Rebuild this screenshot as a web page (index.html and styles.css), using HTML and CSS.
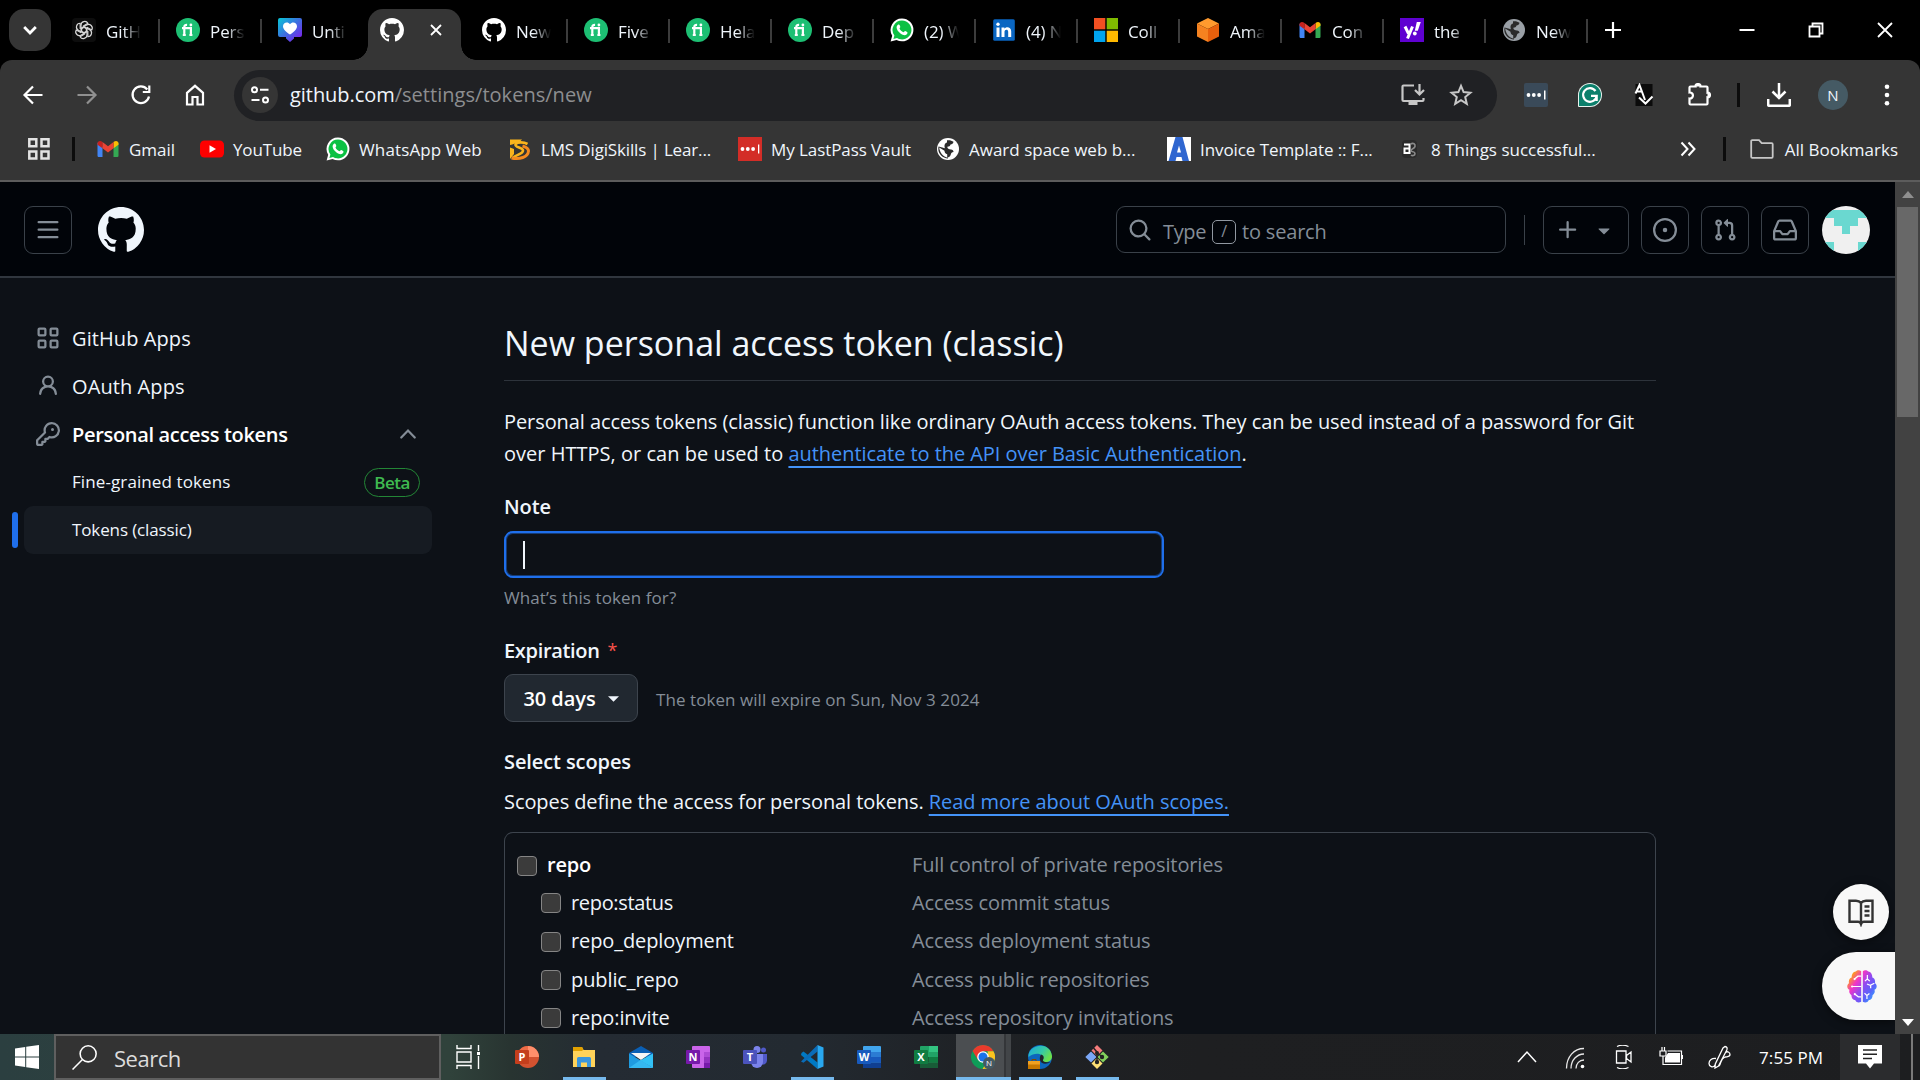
FILE: index.html
```html
<!DOCTYPE html>
<html lang="en">
<head>
<meta charset="utf-8">
<title>New personal access token (classic)</title>
<link rel="stylesheet" href="styles.css">
</head>
<body>
<svg class="defs" width="0" height="0">
  <defs>
    <symbol id="github" viewBox="0 0 16 16"><path d="M8 0c4.42 0 8 3.58 8 8a8.013 8.013 0 0 1-5.45 7.59c-.4.08-.55-.17-.55-.38 0-.27.01-1.13.01-2.2 0-.75-.25-1.23-.54-1.48 1.78-.2 3.65-.88 3.65-3.95 0-.88-.31-1.59-.82-2.15.08-.2.36-1.02-.08-2.12 0 0-.67-.22-2.2.82-.64-.18-1.32-.27-2-.27-.68 0-1.36.09-2 .27-1.53-1.03-2.2-.82-2.2-.82-.44 1.1-.16 1.92-.08 2.12-.51.56-.82 1.28-.82 2.15 0 3.06 1.86 3.75 3.64 3.95-.23.2-.44.55-.51 1.07-.46.21-1.61.55-2.33-.66-.15-.24-.6-.83-1.23-.82-.67.01-.27.38.01.53.34.19.73.9.82 1.13.16.45.68 1.31 2.69.94 0 .67.01 1.3.01 1.49 0 .21-.15.45-.55.38A7.995 7.995 0 0 1 0 8c0-4.42 3.58-8 8-8Z"/></symbol>
    <symbol id="fiverr" viewBox="0 0 24 24"><circle cx="12" cy="12" r="12" fill="#1dbf73"/><path d="M6 10.2h8.9V17M8.3 17V9.2c0-1.7.9-2.4 2.8-2.3M13.4 17h3M6.8 17h3" fill="none" stroke="#fff" stroke-width="2.2"/><circle cx="14.9" cy="7" r="1.4" fill="#fff"/></symbol>
    <symbol id="whatsapp" viewBox="0 0 24 24"><path d="M12 .5A11.4 11.4 0 0 1 12 23.3a11.4 11.4 0 0 1-5.5-1.4L.6 23.4l1.6-5.7A11.4 11.4 0 0 1 12 .5Z" fill="#fff"/><path d="M12 2.4a9.5 9.5 0 1 1-5 17.6l-3.6 1 1-3.5A9.5 9.5 0 0 1 12 2.4Z" fill="#0cc143"/><path d="M8.3 6.6c.6-.3 1.1 0 1.3.5l.7 1.7c.2.6-.9 1.4-.8 1.7.8 1.7 2.1 2.9 3.9 3.7.5.2 1.3-1.4 1.9-1.2l1.8.9c.8.4.3 2.1-.6 2.7-1.5 1-3.7.6-6-1.1-2.2-1.6-3.8-3.8-3.9-5.9 0-1.3.8-2.5 1.7-3Z" fill="#fff"/></symbol>
    <symbol id="gmail" viewBox="0 0 24 24"><path d="M1.500 5.500v13.200c0 .8.7 1.3 1.4 1.3H6.500V10Z" fill="#4285f4"/><path d="M17.500 10v10h3.600c.8 0 1.4-.6 1.4-1.3V5.500Z" fill="#34a853"/><path d="M1.500 7.800V6.500C1.500 4 4.200 3 6.500 5v6.300Z" fill="#c5221f"/><path d="M17.500 11.300V5c2.300-2 5-1 5 1.500v1.300Z" fill="#fbbc04"/><path d="M6.500 5 12 9.200 17.500 5v6.300L12 15.600l-5.500-4.300Z" fill="#ea4335"/></symbol>
    <symbol id="globe" viewBox="0 0 24 24"><circle cx="12" cy="12" r="11"/><path class="land" d="M11 3.300c2.300-.5 4.700.1 6.500 1.500-.3 1.800-1.500 2.700-3 2.800-.4 1.600-1.400 2.200-3.200 2.200 0 1.700 1.600 2.600 3.700 2.600 1.600 0 2.500 1 2.500 2.600-1.700 0-2.300 1-2.800 2.700-.6 1.800-1.700 2.500-3.500 2.800v-3.300c-1.700-.3-2.700-1.400-2.700-3.400L3.200 10.500c.4 5 4 9.500 8.800 10.300v.7C6.700 21.300 2.300 17 2.300 11.800c0-.7.1-1.500.3-2.200l6.300 1.600c-1-3.200.2-5.300 2.100-5.700Z"/></symbol>
    <linearGradient id="heartg" x1="0" y1="0" x2="1" y2="1"><stop offset="0" stop-color="#06c8d6"/><stop offset=".5" stop-color="#3f6be0"/><stop offset="1" stop-color="#8a12f0"/></linearGradient>
    <linearGradient id="braing" x1="0" y1=".1" x2="1" y2=".9"><stop offset="0" stop-color="#ff9a1f"/><stop offset=".12" stop-color="#ff9a1f"/><stop offset=".32" stop-color="#f035c8"/><stop offset=".55" stop-color="#8a4df2"/><stop offset=".75" stop-color="#5a64fa"/><stop offset="1" stop-color="#2fb4ff"/></linearGradient>
    <linearGradient id="edgeg" x1="0" y1="0" x2="1" y2=".5"><stop offset="0" stop-color="#1aa7dd"/><stop offset=".6" stop-color="#35c9a8"/><stop offset="1" stop-color="#6be04b"/></linearGradient>
  </defs>
</svg>

<div class="desktop">
  <div class="browser">
    <div class="tabstrip">
      <button class="tab-search"><svg viewBox="0 0 24 24"><path d="m7 9.500 5 5 5-5" fill="none" stroke="#fff" stroke-width="2.4"/></svg></button>
      <div class="tabs">
        <div class="tab first"><svg class="fav" viewBox="0 0 24 24"><rect width="24" height="24" rx="4" fill="#0d0d0d"/><g fill="none" stroke="#d8d8d8" stroke-width="1.2"><path id="petal" d="M12.200 14.800 9 13V7.200a3.700 3.700 0 0 1 6.900-1.900L11 8.200"/><use href="#petal" transform="rotate(60 12 12)"/><use href="#petal" transform="rotate(120 12 12)"/><use href="#petal" transform="rotate(180 12 12)"/><use href="#petal" transform="rotate(240 12 12)"/><use href="#petal" transform="rotate(300 12 12)"/></g></svg><span>GitH</span></div>
        <div class="tab"><svg class="fav"><use href="#fiverr"/></svg><span>Pers</span></div>
        <div class="tab nosep"><svg class="fav" viewBox="0 0 24 24"><path d="M0 2a2 2 0 0 1 2-2h20a2 2 0 0 1 2 2v15a2 2 0 0 1-2 2h-6v1.500L12 24l-4-3.500V19H2a2 2 0 0 1-2-2Z" fill="url(#heartg)"/><path d="M12 16.500C8.500 14.200 5 11.500 5 8.200 5 4.500 9.800 3 12 6.200 14.200 3 19 4.500 19 8.200c0 3.300-3.500 6-7 8.300Z" fill="#fff"/></svg><span>Unti</span></div>
        <div class="tab active"><svg class="fav white"><use href="#github"/></svg><svg class="close" viewBox="0 0 12 12"><path d="m1 1 10 10M11 1 1 11" stroke="#fff" stroke-width="1.8"/></svg></div>
        <div class="tab"><svg class="fav white"><use href="#github"/></svg><span>New</span></div>
        <div class="tab"><svg class="fav"><use href="#fiverr"/></svg><span>Five</span></div>
        <div class="tab"><svg class="fav"><use href="#fiverr"/></svg><span>Hela</span></div>
        <div class="tab"><svg class="fav"><use href="#fiverr"/></svg><span>Dep</span></div>
        <div class="tab"><svg class="fav"><use href="#whatsapp"/></svg><span>(2) W</span></div>
        <div class="tab"><svg class="fav" viewBox="0 0 24 24"><rect x="1.200" y="1.200" width="21.600" height="21.600" rx="1.500" fill="#0a66c2"/><path d="M4.500 9.500h3V19h-3zM9.500 9.500h2.900v1.300c1.600-2.500 6.800-2 6.800 2.500V19h-3v-5.200c0-2.800-3.700-2.600-3.700 0V19h-3z" fill="#fff"/><circle cx="6" cy="6.200" r="1.700" fill="#fff"/></svg><span>(4) N</span></div>
        <div class="tab"><svg class="fav" viewBox="0 0 24 24"><path d="M0 0h11.300v11.300H0z" fill="#f25022"/><path d="M12.700 0H24v11.300H12.700z" fill="#7fba00"/><path d="M0 12.700h11.300V24H0z" fill="#00a4ef"/><path d="M12.700 12.700H24V24H12.700z" fill="#ffb900"/></svg><span>Coll</span></div>
        <div class="tab"><svg class="fav" viewBox="0 0 24 24"><path d="M12 0 1 5.500 12 11l11-5.500Z" fill="#ff9a2e"/><path d="M1 5.500 12 11v13L1 18.500Z" fill="#f58220"/><path d="M23 5.500 12 11v13l11-5.500Z" fill="#e8600c"/></svg><span>Ama</span></div>
        <div class="tab"><svg class="fav"><use href="#gmail"/></svg><span>Con</span></div>
        <div class="tab"><svg class="fav" viewBox="0 0 24 24"><rect width="24" height="24" fill="#5f01d1"/><path d="m5 8.500 3.500 7M12.500 8.500 7.500 20.500" stroke="#fff" stroke-width="3" fill="none"/><path d="m16.800 4h4l-3 8.800h-3z" fill="#fff"/><circle cx="14.800" cy="15.500" r="1.900" fill="#fff"/></svg><span>the</span></div>
        <div class="tab"><svg class="fav globe-grey"><use href="#globe"/></svg><span>New</span></div>
      </div>
      <button class="newtab"><svg viewBox="0 0 16 16"><path d="M8 0v16M0 8h16" stroke="#fff" stroke-width="2.2"/></svg></button>
      <div class="window-controls">
        <svg viewBox="0 0 16 16"><path d="M.5 8h15" stroke="#fff" stroke-width="2"/></svg>
        <svg viewBox="0 0 16 16"><path d="M1.500 4.500h10v10h-10zM4.500 4V1.500h10v10H12" fill="none" stroke="#fff" stroke-width="1.800"/></svg>
        <svg viewBox="0 0 16 16"><path d="m1 1 14 14M15 1 1 15" stroke="#fff" stroke-width="1.800"/></svg>
      </div>
    </div>

    <div class="toolbar">
      <button class="tool"><svg viewBox="0 0 24 24"><path d="M21.500 12H4M12 3.500 3.500 12l8.500 8.500" class="ln"/></svg></button>
      <button class="tool dim"><svg viewBox="0 0 24 24"><path d="M2.500 12H20M12 3.500l8.500 8.500-8.500 8.500" class="ln"/></svg></button>
      <button class="tool"><svg viewBox="0 0 24 24"><path d="M20 13.500A8.300 8.300 0 1 1 18.300 6.500M20.300 2.500V9h-6.500" class="ln"/></svg></button>
      <button class="tool"><svg viewBox="0 0 24 24"><path d="M4 9.800 12 2.800l8 7V21.500h-5.500V14h-5v7.500H4Z" class="ln"/></svg></button>
      <div class="omnibox">
        <span class="site-chip"><svg viewBox="0 0 20 20"><g fill="none" stroke="#fff" stroke-width="2"><circle cx="4.500" cy="4.800" r="2.500"/><path d="M10 4.800h8.500M1.500 15h8"/><circle cx="15.500" cy="15" r="2.500"/></g></svg></span>
        <span class="url">github.com<em>/settings/tokens/new</em></span>
        <svg class="omni-icon" viewBox="0 0 24 24"><path d="M13 2.500H2.500a1 1 0 0 0-1 1V17a1 1 0 0 0 1 1h19a1 1 0 0 0 1-1v-2M18.500 1v10M14 7l4.500 4.500L23 7" fill="none" stroke="#c7c7c7" stroke-width="2.200"/><path d="M7.500 18h9v4h-9z" fill="#c7c7c7"/></svg>
        <svg class="omni-icon star" viewBox="0 0 24 24"><path d="m12 2.800 2.600 6.300 6.800.6-5.200 4.400 1.600 6.700L12 17.200l-5.800 3.600 1.600-6.700-5.200-4.400 6.800-.6Z" fill="none" stroke="#c7c7c7" stroke-width="2"/></svg>
      </div>
      <button class="tool"><svg viewBox="0 0 24 24"><rect width="24" height="24" rx="2" fill="#3a4a59"/><g fill="#fff"><circle cx="4.500" cy="12" r="1.900"/><circle cx="9.800" cy="12" r="1.900"/><circle cx="15.100" cy="12" r="1.900"/><path d="M20 7.500h1.500v9H20z"/></g></svg></button>
      <button class="tool"><svg viewBox="0 0 24 24"><path d="M12 0a12 12 0 1 1 0 24H1a1 1 0 0 1-1-1V12A12 12 0 0 1 12 0Z" fill="#e8f3ef"/><path d="M12 1a11 11 0 1 1 0 22H1V12A11 11 0 0 1 12 1Z" fill="#0b7f6b"/><path d="M17.500 8A6.800 6.800 0 1 0 18.700 12.800H13M18.700 12.500V18" fill="none" stroke="#fff" stroke-width="2.200"/></svg></button>
      <button class="tool"><svg viewBox="0 0 24 24"><rect x="3.500" y="1" width="17" height="22" fill="#0b0b0b"/><path d="m3.500 10.500 4-8.500L13 17M4.500 8.500h5M7 14.500l6.500 6 7-7" fill="none" stroke="#fff" stroke-width="2"/></svg></button>
      <button class="tool puzzle"><svg viewBox="0 0 24 24"><path d="M2.500 4.500a1 1 0 0 1 1-1H8.500C8 .2 14 .2 13.500 3.500h6a1 1 0 0 1 1 1v5.200c3.400-.5 3.400 5.100 0 4.600v6.200a1 1 0 0 1-1 1h-16a1 1 0 0 1-1-1v-5c4.600.3 4.600-6.300 0-6Z" fill="none" stroke="#fff" stroke-width="2.200"/><path d="M9 3.500C8.500.8 13.500.8 13 3.500zM20.500 9.500c3.300-.3 3.300 4.900 0 4.600z" fill="#fff"/></svg></button>
      <i class="tool-div"></i>
      <button class="tool"><svg viewBox="0 0 24 24"><path d="M12 0v14M5.500 8.500 12 15l6.500-6.500M1.200 16v5.800a1 1 0 0 0 1 1h19.600a1 1 0 0 0 1-1V16" fill="none" stroke="#fff" stroke-width="2.500"/></svg></button>
      <button class="tool"><span class="profile">N</span></button>
      <button class="tool"><svg viewBox="0 0 24 24"><g fill="#fff"><circle cx="12" cy="3.800" r="2.300"/><circle cx="12" cy="12" r="2.300"/><circle cx="12" cy="20.200" r="2.300"/></g></svg></button>
    </div>

    <div class="bookmarks">
      <svg class="apps" viewBox="0 0 22 22"><path d="M1.300 1.300h7v7h-7zM13.500 1.300h7v7h-7zM1.300 13.500h7v7h-7zM13.500 13.500h7v7h-7z" fill="none" stroke="#e3e3e3" stroke-width="2.500"/></svg>
      <i class="bm-div"></i>
      <div class="bm-list">
        <span class="bm"><svg><use href="#gmail"/></svg>Gmail</span>
        <span class="bm t1"><svg viewBox="0 0 24 24"><rect y="3.500" width="24" height="17" rx="4.500" fill="#f00"/><path d="m9.500 8.300 6.500 3.700-6.500 3.700z" fill="#fff"/></svg>YouTube</span>
        <span class="bm w1"><svg><use href="#whatsapp"/></svg>WhatsApp Web</span>
        <span class="bm t1"><svg viewBox="0 0 24 24"><path d="M2 2.500h12L10.500 6C7.500 6 5 7.500 2 8zM2 10.500 6 12v5l-4 5z" fill="#fbb51c"/><path d="M19.500 7c-3.500-2-10.500-2.500-12 .500-1 3 7.500 3 7.500 6 0 3.500-6 4-10 7" fill="none" stroke="#fbb51c" stroke-width="2.600"/><path d="M3.500 21c8 1.500 16.500-.500 17-7 0-3-2.500-4-6-5" fill="none" stroke="#f58a1f" stroke-width="3"/></svg>LMS DigiSkills | Lear...</span>
        <span class="bm t2"><svg viewBox="0 0 24 24"><rect width="24" height="24" fill="#d32d27"/><g fill="#fff"><circle cx="4.500" cy="12" r="1.900"/><circle cx="9.800" cy="12" r="1.900"/><circle cx="15.100" cy="12" r="1.900"/><path d="M20 7.500h1.300v9H20z"/></g></svg>My LastPass Vault</span>
        <span class="bm"><svg class="globe-white"><use href="#globe"/></svg>Award space web b...</span>
        <span class="bm t2"><svg viewBox="0 0 24 24"><rect width="24" height="24" fill="#fff"/><path d="M8.500 0h7L22 24h-6.500l-1-4h-5l-1 4H1.500Z" fill="#2f66d0"/><path d="m12 8.500 2 7h-4z" fill="#fff"/></svg>Invoice Template :: F...</span>
        <span class="bm"><svg viewBox="0 0 24 24"><rect x="4" y="3" width="15" height="18" rx="4" fill="#2a2a2a"/><g fill="none"><path d="M6 7.500h5.500V17M11.500 11.500H6.500V16H12" stroke="#fff" stroke-width="2"/><path d="M12.500 7c3-1.500 5 0 4.500 2.500s-4 2-4 4 4 .5 4 3-3 2.500-4 1.500" stroke="#8a8a8a" stroke-width="1.600"/></g></svg>8 Things successful...</span>
      </div>
      <svg class="more" viewBox="0 0 16 16"><path d="m1.500 1.500 6 6.500-6 6.500M8.500 1.500l6 6.500-6 6.500" fill="none" stroke="#fff" stroke-width="2"/></svg>
      <i class="bm-div"></i>
      <span class="bm all"><svg viewBox="0 0 24 24"><path d="M1.200 4.200a1 1 0 0 1 1-1H9l2.700 3h10a1 1 0 0 1 1 1v12.600a1 1 0 0 1-1 1H2.200a1 1 0 0 1-1-1Z" fill="none" stroke="#c7c7c7" stroke-width="1.800"/></svg>All Bookmarks</span>
    </div>

    <div class="viewport">
      <div class="page">
        <header class="gh-header">
          <button class="sq"><svg viewBox="0 0 16 16"><path d="M1 2.750A.75.75 0 0 1 1.750 2h12.500a.75.75 0 0 1 0 1.500H1.750A.75.75 0 0 1 1 2.750Zm0 5A.75.75 0 0 1 1.750 7h12.500a.75.75 0 0 1 0 1.500H1.750A.75.75 0 0 1 1 7.750ZM1.750 12h12.500a.75.75 0 0 1 0 1.500H1.750a.75.75 0 0 1 0-1.500Z"/></svg></button>
          <svg class="mark"><use href="#github"/></svg>
          <div class="search"><svg viewBox="0 0 16 16"><path d="M10.680 11.740a6 6 0 0 1-7.922-8.982 6 6 0 0 1 8.982 7.922l3.040 3.040a.749.749 0 0 1-1.060 1.060ZM11.500 7a4.499 4.499 0 1 0-8.997 0A4.499 4.499 0 0 0 11.500 7Z"/></svg><span class="ty">Type</span><kbd>/</kbd><span class="ts">to search</span></div>
          <i class="hdiv"></i>
          <button class="sq plus"><svg viewBox="0 0 16 16"><path d="M7.750 2a.75.75 0 0 1 .75.75V7h4.250a.75.75 0 0 1 0 1.500H8.500v4.250a.75.75 0 0 1-1.500 0V8.500H2.750a.75.75 0 0 1 0-1.500H7V2.750A.75.75 0 0 1 7.750 2Z"/></svg><svg viewBox="0 0 16 16"><path d="m4.427 7.427 3.396 3.396a.25.25 0 0 0 .354 0l3.396-3.396A.25.25 0 0 0 11.396 7H4.604a.25.25 0 0 0-.177.427Z"/></svg></button>
          <button class="sq"><svg viewBox="0 0 16 16"><path d="M8 9.500a1.500 1.500 0 1 0 0-3 1.500 1.500 0 0 0 0 3Z"/><path d="M8 0a8 8 0 1 1 0 16A8 8 0 0 1 8 0ZM1.500 8a6.500 6.500 0 1 0 13 0 6.500 6.500 0 0 0-13 0Z"/></svg></button>
          <button class="sq"><svg viewBox="0 0 16 16"><path d="M1.500 3.250a2.250 2.250 0 1 1 3 2.122v5.256a2.251 2.251 0 1 1-1.500 0V5.372A2.250 2.250 0 0 1 1.500 3.250Zm5.677-.177L9.573.677A.25.25 0 0 1 10 .854V2.500h1A2.500 2.500 0 0 1 13.500 5v5.628a2.251 2.251 0 1 1-1.500 0V5a1 1 0 0 0-1-1h-1v1.646a.25.25 0 0 1-.427.177L7.177 3.427a.25.25 0 0 1 0-.354ZM3.750 2.500a.75.75 0 1 0 0 1.500.75.75 0 0 0 0-1.500Zm0 9.500a.75.75 0 1 0 0 1.500.75.75 0 0 0 0-1.500Zm8.250.75a.75.75 0 1 0 1.500 0 .75.75 0 0 0-1.500 0Z"/></svg></button>
          <button class="sq"><svg viewBox="0 0 16 16"><path d="M2.800 2.060A1.750 1.750 0 0 1 4.410 1h7.180c.7 0 1.333.417 1.610 1.060l2.740 6.395c.04.093.06.194.06.295v4.500A1.750 1.750 0 0 1 14.250 15H1.750A1.750 1.750 0 0 1 0 13.250v-4.500c0-.101.02-.202.06-.295Zm1.610.44a.25.25 0 0 0-.230.152L1.887 8H4.750a.75.75 0 0 1 .6.3L6.625 10h2.750l1.275-1.700a.75.75 0 0 1 .6-.3h2.863L11.820 2.652a.25.25 0 0 0-.230-.152Zm10.090 7h-2.875l-1.275 1.700a.75.75 0 0 1-.6.3h-3.500a.75.75 0 0 1-.6-.3L4.375 9.500H1.500v3.750c0 .138.112.25.25.25h12.500a.25.25 0 0 0 .25-.25Z"/></svg></button>
          <svg class="avatar" viewBox="0 0 48 48"><defs><clipPath id="av"><circle cx="24" cy="24" r="24"/></clipPath></defs><g clip-path="url(#av)"><rect width="48" height="48" fill="#f0f0f0"/><path d="M0 4h48v8H36v8h-8v8h-8v-8h-8v-8H0zM0 36h12v12H0zM36 36h12v12H36z" fill="#6ad8d0"/></g></svg>
        </header>

        <div class="settings">
          <nav class="side">
            <a class="item"><svg viewBox="0 0 16 16"><g fill="none" stroke="#848d97" stroke-width="1.500"><rect x="1.750" y="1.750" width="4.500" height="4.500" rx=".6"/><rect x="9.750" y="1.750" width="4.500" height="4.500" rx=".6"/><rect x="1.750" y="9.750" width="4.500" height="4.500" rx=".6"/><rect x="9.750" y="9.750" width="4.500" height="4.500" rx=".6"/></g></svg>GitHub Apps</a>
            <a class="item"><svg viewBox="0 0 16 16"><path d="M10.561 8.073a6.005 6.005 0 0 1 3.432 5.142.75.75 0 1 1-1.498.070 4.500 4.500 0 0 0-8.990 0 .75.75 0 0 1-1.498-.070 6.004 6.004 0 0 1 3.431-5.142 3.999 3.999 0 1 1 5.123 0ZM10.500 5a2.500 2.500 0 1 0-5 0 2.500 2.500 0 0 0 5 0Z"/></svg>OAuth Apps</a>
            <a class="item strong"><svg viewBox="0 0 16 16"><path d="M10.500 0a5.499 5.499 0 1 1-1.288 10.848l-.932.932a.749.749 0 0 1-.530.220H7v.750a.749.749 0 0 1-.220.530l-.5.500a.749.749 0 0 1-.530.220H5v.750a.749.749 0 0 1-.220.530l-.5.500a.749.749 0 0 1-.530.220h-2A1.750 1.750 0 0 1 0 14.250v-2c0-.199.079-.389.220-.530l4.932-4.932A5.500 5.500 0 0 1 10.500 0Zm-4 5.500c-.001.431.069.860.205 1.269a.750.750 0 0 1-.181.768L1.500 12.560v1.690c0 .138.112.250.250.250h1.690l.060-.060v-1.190a.750.750 0 0 1 .750-.750h1.190l.060-.060v-1.190a.750.750 0 0 1 .750-.750h1.190l1.023-1.025a.750.750 0 0 1 .768-.180A4 4 0 1 0 6.500 5.500ZM11 6a1 1 0 1 1 0-2 1 1 0 0 1 0 2Z"/></svg>Personal access tokens<svg class="chev" viewBox="0 0 16 16"><path d="m3.500 10.300 4.500-4.600 4.500 4.600" fill="none" stroke="#848d97" stroke-width="1.500" stroke-linecap="round"/></svg></a>
            <a class="sub">Fine-grained tokens<b>Beta</b></a>
            <a class="sub current">Tokens (classic)</a>
          </nav>
          <main>
            <h1>New personal access token (classic)</h1>
            <p class="intro">Personal access tokens (classic) function like ordinary OAuth access tokens. They can be used instead of a password for Git<br><span class="over">over HTTPS, or can be used to </span><a>authenticate to the API over Basic Authentication</a>.</p>
            <label class="lbl note">Note</label>
            <div class="field"><i></i></div>
            <p class="hint">What’s this token for?</p>
            <label class="lbl exp">Expiration <sup>*</sup></label>
            <div class="exp-row"><button class="days">30 days<svg viewBox="0 0 12 6"><path d="M0 0h12L6 6Z" fill="#f0f6fc"/></svg></button><span>The token will expire on Sun, Nov 3 2024</span></div>
            <h2>Select scopes</h2>
            <p class="scopes-p">Scopes define the access for personal tokens. <a>Read more about OAuth scopes.</a></p>
            <ul class="scopes">
              <li class="top"><i></i><span>repo</span><em>Full control of private repositories</em></li>
              <li><i></i><span class="st">repo:status</span><em>Access commit status</em></li>
              <li><i></i><span>repo_deployment</span><em>Access deployment status</em></li>
              <li><i></i><span>public_repo</span><em>Access public repositories</em></li>
              <li><i></i><span>repo:invite</span><em>Access repository invitations</em></li>
            </ul>
          </main>
        </div>
        <div class="float reader"><svg viewBox="0 0 26 28"><path d="M13 4c-1.500-2-3-2.300-5-2.300H1.500v21H10c1.500 0 2.500.8 3 2.300.5-1.500 1.500-2.300 3-2.300h8.500v-21H18c-2 0-3.500.3-5 2.300Zm0 0v20M16.500 7.500h5M16.500 12h5M16.500 16.500h5" fill="none" stroke="#333" stroke-width="2.400"/></svg></div>
        <div class="float brain"><svg viewBox="0 0 36 40"><path d="M17 1.500v37c-2.500 1.500-6 1.200-7-1.800-3-.5-5-3-4.800-6.200C2.800 29 2 26.500 2.800 24-.6 22.500-.6 17.500 2.300 16 1.500 13 3 9.500 5.500 9 5.200 5 8 1.500 10.500 1.800 12 0 15.500 0 17 1.500ZM19 1.500v37c2.500 1.500 6 1.200 7-1.800 3-.5 5-3 4.800-6.200 2.400-1.500 3.200-4 2.400-6.500 3.400-1.500 3.400-6.500.5-8 .8-3-.7-6.500-3.200-7C30.800 5 28 1.500 25.500 1.800 24 0 20.500 0 19 1.500Z" fill="url(#braing)"/><g fill="none" stroke="#fff" stroke-width="1.500"><path d="M17 7.500h-4l-4 3.500M17 20H6.500M17 32.500h-3.500L9.500 29.500M24.500 6v5l-3 2.500M24.500 11l3 2.500M24 35v-4L21 28M24 31l3-2.500M24 17l4 1.500 5-2.500M28.500 18.500V22"/></g><g fill="#fff"><circle cx="9" cy="11" r="1.300"/><circle cx="6" cy="20" r="1.300"/><circle cx="9.300" cy="29.300" r="1.300"/></g></svg></div>
      </div>
      <div class="scrollbar"><i class="up"></i><i class="thumb"></i><i class="down"></i></div>
    </div>
  </div>

  <div class="taskbar">
    <div class="start"><svg viewBox="0 0 24 24"><path d="M0 3.400 10.200 2v9.500H0zM11.200 1.800 24 0v11.500H11.200zM0 12.500h10.200V22L0 20.600zM11.200 12.500H24V24l-12.800-1.800z" fill="#fff"/></svg></div>
    <div class="tb-search"><svg viewBox="0 0 24 24"><circle cx="15.500" cy="8.500" r="7.700" fill="none" stroke="#fff" stroke-width="1.500"/><path d="M9.800 14.200.5 23.500" stroke="#fff" stroke-width="1.500"/></svg><span>Search</span></div>
    <div class="taskview"><svg viewBox="0 0 25 24"><path d="M1 0v3.500h14V0M1 7h14v10H1zM1 24v-3.500h14V24M22.500 0v6M22.500 11v13" fill="none" stroke="#fff" stroke-width="1.400"/><path d="M21 7h3v3h-3z" fill="#fff"/></svg></div>
    <div class="apps-row">
      <div class="app"><svg viewBox="0 0 24 24"><circle cx="13" cy="12" r="11" fill="#d35230"/><path d="M13 1a11 11 0 0 0-11 11h11Z" fill="#ed6c47"/><path d="M13 1a11 11 0 0 1 11 11H13Z" fill="#ff8f6b"/><rect y="5" width="14" height="14" rx="1" fill="#c43e1c"/><text x="7" y="16" class="lt">P</text></svg></div>
      <div class="app run"><svg viewBox="0 0 24 24"><path d="M1 2h9l1.500 3H23v17H1z" fill="#ffd35a"/><path d="M1 2h9l1.500 2.500L10 6H1z" fill="#e2a100"/><path d="M5 22v-8.500a1.500 1.500 0 0 1 1.500-1.500h11a1.500 1.500 0 0 1 1.500 1.500V22h-4v-4.500H9V22z" fill="#3a96dd"/></svg></div>
      <div class="app"><svg viewBox="0 0 24 24"><path d="M0 8 12 1l12 7v4H0z" fill="#0a5fb4"/><path d="M2 8h20L12 15z" fill="#f5f5f5"/><path d="M0 8.500 24 23H0z" fill="#1f9be0"/><path d="M24 8.500V23L11 15.500z" fill="#33c1f5"/><path d="M0 23 11.500 15 24 23z" fill="#35b8f1"/></svg></div>
      <div class="app"><svg viewBox="0 0 24 24"><rect x="6" y="1" width="18" height="22" rx="1" fill="#ca64ea"/><path d="M18 7h6v5h-6z" fill="#ae4bd5"/><path d="M18 12h6v5.500h-6z" fill="#9332bf"/><path d="M18 17.500h6V23h-6z" fill="#7719aa"/><rect y="5" width="14" height="14" rx="1" fill="#7719aa"/><text x="7" y="16" class="lt">N</text></svg></div>
      <div class="app"><svg viewBox="0 0 24 24"><circle cx="14" cy="4.500" r="3.500" fill="#7b83eb"/><circle cx="20.500" cy="5" r="2.500" fill="#5059c9"/><path d="M16 9h8v6.500a4 4 0 0 1-6 3.500z" fill="#5059c9"/><path d="M8 9h12v8a6 6 0 0 1-12 0z" fill="#7b83eb"/><rect y="5" width="14" height="14" rx="1" fill="#4b53bc"/><text x="7" y="16" class="lt">T</text></svg></div>
      <div class="app run"><svg viewBox="0 0 24 24"><path d="m1.500 8 2-1.500L17.500 17.500V24L1 10z" fill="#0079c4"/><path d="M1 16.500 17.500 0v6.500L3.500 17.800l-2-1z" fill="#0a6cb8"/><path d="m17.500 0 6 2.500v19l-6 2.500z" fill="#29a8f0"/></svg></div>
      <div class="app"><svg viewBox="0 0 24 24"><rect x="6" y="1" width="18" height="22" rx="1" fill="#41a5ee"/><path d="M6 7h18v5H6z" fill="#2b7cd3"/><path d="M6 12h18v5.500H6z" fill="#185abd"/><path d="M6 17.500h18V23H6z" fill="#103f91"/><rect y="5" width="14" height="14" rx="1" fill="#185abd"/><text x="7" y="16" class="lt">W</text></svg></div>
      <div class="app"><svg viewBox="0 0 24 24"><rect x="6" y="1" width="18" height="22" rx="1" fill="#21a366"/><path d="M15 1h9v6h-9z" fill="#33c481"/><path d="M6 12h9v5.500H6z" fill="#185c37"/><path d="M15 12h9v5.500h-9z" fill="#107c41"/><path d="M6 17.500h18V23H6z" fill="#185c37"/><rect y="5" width="14" height="14" rx="1" fill="#107c41"/><text x="7" y="16" class="lt">X</text></svg></div>
      <div class="app run focus"><svg viewBox="0 0 24 24"><circle cx="12" cy="12" r="12" fill="#0f9d58"/><path d="M12 0a12 12 0 0 1 10.500 6.300H12L7 15 1.600 6A12 12 0 0 1 12 0Z" fill="#ea3a2c"/><path d="M22.500 6.300A12 12 0 0 1 11.500 24l6-9.500L16.500 6.300Z" fill="#fcc31e"/><circle cx="12" cy="12" r="5.800" fill="#fff"/><circle cx="12" cy="12" r="4.500" fill="#1a73e8"/><circle cx="18" cy="18" r="6" fill="#455a64"/><text x="18" y="21" class="ln-n">N</text></svg></div>
      <div class="app run"><svg viewBox="0 0 24 24"><circle cx="12" cy="12" r="12" fill="#0c66bd"/><path d="M.5 10C2-1 22-4 24 11c.3 4-3 6.500-7.500 6-2-.2-2.500-1.500-1.500-2.500C16 9 8 6 .5 12Z" fill="url(#edgeg)"/><path d="M13 9.500c3.500 1 3 4 2 5.500-.5 1.500 2 3 7 2-2 2-9 3-10-2-.4-2 0-4 1-5.500Z" fill="#20242a"/><rect y="16" width="12" height="8" fill="#c87800"/><rect y="16" width="12" height="3.500" fill="#f0a020"/><path d="M4 16v-1.500h4V16" fill="none" stroke="#7a4a00"/></svg></div>
      <div class="app run"><svg viewBox="0 0 24 24"><path d="m12 0 5.500 5.500L12 11 6.500 5.500z" fill="#f57c7c"/><path d="m6 6.500 5.500 5.500L6 17.500.3 12z" fill="#7ba7f7"/><path d="m18 6.500 5.700 5.500-5.700 5.500-5.500-5.500z" fill="#83d05c"/><path d="m12 13 5.500 5.500L12 24l-5.500-5.500z" fill="#fde075"/><path d="m8.500 3 3.500 4v11M12 8l6 4" fill="none" stroke="#222" stroke-width="1.500"/><circle cx="12" cy="8" r="2" fill="#222"/><circle cx="12" cy="17" r="2.200" fill="#222"/><circle cx="17" cy="12" r="2.200" fill="#222"/></svg></div>
    </div>
    <div class="tray">
      <span><svg viewBox="0 0 24 24"><path d="m3 17 9-10 9 10" fill="none" stroke="#fff" stroke-width="1.500"/></svg></span>
      <span><svg viewBox="0 0 24 24"><g fill="none" stroke="#e8e8e8" stroke-width="1.300"><path d="M3.500 23.500C3.500 12 11 3.500 21 3.500M8 23.500C8 15 14 9 21 9M13 23.500c0-5 3.500-8.500 8-8.500"/></g><circle cx="19.500" cy="21.500" r="1.800" fill="#fff"/></svg></span>
      <span class="meet"><svg viewBox="0 0 24 24"><path d="M4.500 6h9.500v12H4.500zM14.500 10.500l4.500-3.500v10l-4.500-3.500zM5 1.500C8 0 13 0 16.500 1.500M5 22.500c3 1.500 8 1.500 11.500 0" fill="none" stroke="#fff" stroke-width="1.300"/></svg></span>
      <span><svg viewBox="0 0 24 24"><path d="M3 2v4M1 6h6v5H1zM5.500 2v4M4 11v8.500h18.500V6H8.500" fill="none" stroke="#fff" stroke-width="1.200"/><path d="M9 8h12v9.500H6v-5z" fill="#fff"/><path d="M23 10h1v4h-1z" fill="#fff"/></svg></span>
      <span><svg viewBox="0 0 24 24"><path d="M18 1.500c2 .3 2.500 1.500 1.800 3.500L11.500 21l-3.500 2 .3-4L16 3Zm-9 12C5 13 2 15 2 18.500c0 3 4 5 6 1.500M12 21c3-4 1-7 6-9 3-.5 5 0 5-2.500S20 6 19 7.500" fill="none" stroke="#fff" stroke-width="1.300"/></svg></span>
      <time>7:55 PM</time>
      <div class="notify"><svg viewBox="0 0 24 24"><path d="M0 0h24v18.500h-8L12 23.500 8 18.500H0z" fill="#fff"/><path d="M5 5h14M5 9.300h14M5 13.600h9" stroke="#222" stroke-width="1.500"/></svg></div>
      <i class="peek"></i>
    </div>
  </div>
</div>
</body>
</html>
```
FILE: styles.css
```css
* { box-sizing: border-box; }
body {
  margin: 0;
  width: 1920px;
  height: 1080px;
  overflow: hidden;
  background: #000;
  color: #f0f6fc;
  font-family: "Open Sans", "Noto Sans", sans-serif;
  font-size: 20px;
}
button { border: 0; background: none; padding: 0; font: inherit; color: inherit; display: flex; align-items: center; justify-content: center; }
h1, h2, p, ul { margin: 0; padding: 0; font-weight: 400; }
em { font-style: normal; }
svg { display: block; flex: none; }
.defs { position: absolute; }

.desktop { display: flex; flex-direction: column; height: 1080px; }
.browser { display: flex; flex-direction: column; height: 1034px; }

/* Tab strip */
.tabstrip { display: flex; height: 60px; padding-left: 9px; background: #000; }
.tab-search { width: 42px; height: 42px; margin-top: 9px; border-radius: 15px; background: #353535; }
.tab-search svg { width: 28px; height: 28px; }
.tabs { display: flex; margin-left: 7px; }
.tab { position: relative; display: flex; align-items: center; width: 102px; height: 60px; padding-left: 14px; font-size: 17px; }
.tab.first { width: 104px; }
.tab::after { content: ""; position: absolute; right: 2px; top: 19px; width: 2.500px; height: 24px; background: #3c3c3c; }
.tab.nosep::after, .tab.active::after { background: none; }
.tab .fav { width: 24px; height: 24px; }
.tab span {
  margin-left: 10px;
  padding-top: 2px;
  white-space: nowrap;
  letter-spacing: -.1px;
  -webkit-mask-image: linear-gradient(90deg, #000 17px, transparent 35px);
  mask-image: linear-gradient(90deg, #000 17px, transparent 35px);
}
.white { fill: #fff; }
.tab.active { height: 51px; width: 93px; margin: 9px 7px 0 2px; padding: 0 0 9px 12px; border-radius: 15px 15px 0 0; background: #353535; }
.tab.active::before, .tab.active::after {
  content: ""; position: absolute; top: auto; bottom: 0; width: 15px; height: 15px;
}
.tab.active::before { left: -15px; background: radial-gradient(circle at 0 0, transparent 14.500px, #353535 15px); }
.tab.active::after { right: -15px; background: radial-gradient(circle at 100% 0, transparent 14.500px, #353535 15px); }
.tab .close { width: 12px; height: 12px; margin-left: 26px; }
.globe-grey { fill: #9aa0a6; }
.globe-white { fill: #fff; }
.land { fill: #2b2b2b; }
.newtab { width: 46px; }
.newtab svg { width: 16px; height: 16px; }
.window-controls { display: flex; gap: 53px; margin-left: auto; margin-right: 27px; align-items: center; padding-bottom: 1px; }
.window-controls svg { width: 16px; height: 16px; }

/* Toolbar */
.toolbar { display: flex; align-items: center; height: 70px; padding: 0 6px; background: #353535; border-radius: 12px 12px 0 0; }
.tool { width: 54px; height: 54px; }
.tool svg { width: 24px; height: 24px; }
.puzzle { padding-left: 2px; }
.ln { fill: none; stroke: #fff; stroke-width: 2.200; }
.dim { opacity: .45; }
.omnibox { display: flex; align-items: center; width: 1263px; height: 51px; margin: 0 12px; padding: 0 24px 0 8px; border-radius: 26px; background: #202124; }
.site-chip { display: flex; align-items: center; justify-content: center; width: 36px; height: 36px; border-radius: 50%; background: #353535; }
.site-chip svg { width: 20px; height: 20px; }
.url { margin-left: 12px; margin-right: auto; padding-bottom: 2px; letter-spacing: -.05px; }
.url em { color: #8d8e90; letter-spacing: .03px; }
.omni-icon { width: 24px; height: 24px; }
.omni-icon.star { margin-left: 24px; }
.tool-div { display: flex; width: 3px; height: 24px; margin: 0 12px; background: #0c0c0c; }
.profile { width: 30px; height: 30px; border-radius: 50%; background: #455a64; font-size: 15px; line-height: 30px; }

/* Bookmarks */
.bookmarks { display: flex; align-items: center; height: 52px; padding: 0 22px 12px 28px; background: #353535; border-bottom: 2px solid #5c5c5c; font-size: 17px; }
.apps { width: 22px; height: 22px; }
.bm-div { width: 3px; height: 24px; margin-left: 22px; background: #0c0c0c; }
.bm-list { display: grid; grid-template-columns: 104px 126px 182px 230px 198px 231px 231px 200px; margin-left: 21px; }
.bm { display: flex; align-items: center; gap: 9px; white-space: nowrap; letter-spacing: 0; }
.bm svg { width: 24px; height: 24px; }
.bm.t1 { letter-spacing: -.15px; }
.bm.t2 { letter-spacing: -.08px; }
.bm.w1 { letter-spacing: .13px; }
.more { width: 16px; height: 16px; margin-left: auto; margin-right: 5px; }
.bm.all { margin-left: 24px; gap: 11px; }

/* Page frame */
.viewport { display: flex; height: 852px; }
.page { position: relative; width: 1895px; overflow: hidden; background: #0d1117; }
.scrollbar { display: flex; flex-direction: column; align-items: center; width: 25px; background: #424242; }
.scrollbar .up { margin-top: 9px; border: 6px solid transparent; border-top: 0; border-bottom: 7px solid #8f8f8f; }
.scrollbar .thumb { width: 21px; height: 210px; margin-top: 9px; background: #686868; }
.scrollbar .down { margin-top: auto; margin-bottom: 8px; border: 6px solid transparent; border-bottom: 0; border-top: 7px solid #fff; }

/* Site header */
.gh-header { display: flex; align-items: flex-start; height: 96px; padding: 24px 25px 0 24px; background: #010409; border-bottom: 2px solid #30363e; }
.gh-header svg { fill: #848d97; }
.sq { width: 48px; height: 48px; margin-left: 12px; border: 1px solid #3a4149; border-radius: 9px; }
.sq:first-child { margin-left: 0; }
.sq svg { width: 24px; height: 24px; }
.sq.plus { width: 86px; margin-left: 18px; gap: 12px; }
.gh-header .mark { width: 46px; height: 46px; margin: 1px 0 0 26px; fill: #f0f6fc; }
.search { display: flex; align-items: center; width: 390px; height: 47px; margin-left: auto; padding: 3px 11px 0; border: 1px solid #3a4149; border-radius: 9px; color: #848d97; }
.search svg { width: 24px; height: 24px; margin: -3px 11px 0 0; }
.search .ty { letter-spacing: -.35px; }
.search .ts { letter-spacing: -.2px; }
.search kbd { width: 24px; height: 24px; margin: 2px 6px 0 6px; border: 1px solid #9198a1; border-radius: 5px; font: 16px/21px "Open Sans", sans-serif; text-align: center; }
.hdiv { width: 1px; height: 30px; margin: 9px 0 0 18px; background: #3a4149; }
.avatar { width: 48px; height: 48px; margin-left: 13px; }

/* Settings layout */
.settings { display: grid; grid-template-columns: 432px 1152px; column-gap: 72px; }
.side { display: flex; flex-direction: column; padding: 36px 0 0 24px; }
.item, .sub { display: flex; align-items: center; height: 48px; }
.item { padding: 0 12px; letter-spacing: .09px; }
.item svg { width: 24px; height: 24px; margin-right: 12px; fill: #848d97; }
.item.strong { font-weight: 600; letter-spacing: -.32px; color: #fff; }
.item .chev { margin: 0 0 0 auto; }
.sub { position: relative; padding: 0 12px 2px 48px; font-size: 17px; letter-spacing: .1px; }
.sub b { width: 56px; height: 29px; margin: 2px 0 0 auto; border: 1px solid #238636; border-radius: 15px; color: #3fb950; font-weight: 600; line-height: 27px; text-align: center; letter-spacing: -.5px; }
.sub.current { background: #161b22; border-radius: 9px; letter-spacing: -.12px; }
.sub.current::before { content: ""; position: absolute; left: -12px; top: 6px; width: 6px; height: 36px; border-radius: 6px; background: #1f6feb; }

main { padding-top: 38px; }
h1 { padding-bottom: 10px; border-bottom: 1px solid #2d333b; font-size: 34px; line-height: 54px; letter-spacing: 0; }
main p { line-height: 32px; letter-spacing: -.08px; }
main p a { color: #4493f8; text-decoration: underline 2px; text-underline-offset: 5px; text-decoration-skip-ink: none; letter-spacing: -.05px; }
main .intro { margin-top: 25px; white-space: nowrap; }
.over { letter-spacing: .02px; }
.lbl, h2 { display: block; font-size: 20px; font-weight: 600; line-height: 32px; letter-spacing: -.1px; }
.note { margin-top: 21px; }
.field { display: flex; align-items: center; width: 660px; height: 47px; margin-top: 8px; padding-left: 17px; border: 2px solid #1f6feb; border-radius: 9px; box-shadow: inset 0 0 0 1px #153b75; }
.field i { width: 2px; height: 28px; background: #f0f6fc; }
main .hint { margin-top: 6px; font-size: 17px; line-height: 28px; letter-spacing: .1px; color: #848d97; }
.exp { margin-top: 23px; letter-spacing: -.32px; }
.exp sup { margin-left: 3px; color: #f85149; font-size: 18px; font-weight: 400; line-height: 0; vertical-align: 1px; }
.exp-row { display: flex; align-items: center; margin-top: 7px; }
.exp-row span { margin-left: 18px; padding-top: 3px; font-size: 17px; letter-spacing: .066px; color: #848d97; }
.days { width: 134px; height: 48px; border: 1px solid #3d444d; border-radius: 9px; background: #212830; font-weight: 600; letter-spacing: -.05px; color: #fff; }
.days svg { width: 11px; height: 6px; margin: 1px 0 0 12px; }
h2 { margin-top: 24px; }
.scopes-p { margin-top: 8px; }
.scopes { height: 240px; margin-top: 14px; padding: 12px 0 0 12px; border: 1px solid #3d444d; border-bottom: 0; border-radius: 9px 9px 0 0; list-style: none; }
.scopes li { display: grid; grid-template-columns: 20px 331px auto; column-gap: 10px; align-items: center; height: 38.300px; padding-left: 24px; letter-spacing: -.1px; }
.scopes .top { grid-template-columns: 20px 355px auto; padding-left: 0; }
.scopes i { width: 20px; height: 20px; margin-top: 2px; border: 1.500px solid #858585; border-radius: 4px; background: #3b3b3b; }
.scopes .top i { margin-top: 3px; }
.scopes .top span { font-weight: 600; color: #fff; letter-spacing: -.2px; }
.scopes .top + li .st { letter-spacing: -.33px; }
.scopes em { color: #848d97; letter-spacing: -.11px; }

/* Floating assistant buttons */
.float { position: absolute; display: flex; align-items: center; justify-content: center; background: #f8f8f8; box-shadow: 0 2px 10px rgba(0,0,0,.5); }
.reader { left: 1833px; top: 702px; width: 56px; height: 56px; padding-top: 2px; border-radius: 50%; }
.reader svg { width: 26px; height: 28px; }
.brain { left: 1822px; top: 770px; width: 73px; height: 68px; padding-left: 7px; border-radius: 34px 0 0 34px; }
.brain svg { width: 36px; height: 34px; }
.brain svg { height: 33px; }

/* Taskbar */
.taskbar { display: flex; height: 46px; background: linear-gradient(90deg, #2b3f40 0, #30423b 450px, #283431 510px, #242b33 600px, #232a31 800px, #1f2226 960px, #1e1f21 1200px, #1d1e20 100%); }
.start { display: flex; align-items: center; justify-content: center; width: 54px; }
.start svg { width: 24px; height: 24px; }
.tb-search { display: flex; align-items: center; width: 387px; padding-left: 16px; border: 2px solid #5f5f5f; background: #333; color: #dcdcdc; font-size: 22px; letter-spacing: -.5px; }
.tb-search svg { width: 25px; height: 25px; margin-right: 17px; }
.tb-search span { padding-top: 1px; }
.taskview { display: flex; align-items: center; width: 57.500px; padding-left: 15px; }
.taskview svg { width: 25px; height: 24px; }
.apps-row { display: flex; }
.app { display: flex; align-items: center; justify-content: center; position: relative; width: 57px; height: 46px; }
.app svg { width: 24px; height: 24px; }
.app.run::after { content: ""; position: absolute; left: 7px; bottom: 0; width: 43px; height: 3px; background: #76b9ed; }
.app.focus { background: linear-gradient(90deg, transparent 1.500px, #4b4e51 1.500px, #4b4e51 49px, #343639 49px, #343639 51px, #424548 51px, #424548 56px, transparent 56px); }
.app.focus::after { left: 1.500px; width: 55px; }
.lt { fill: #fff; font: 700 11px "Open Sans", sans-serif; text-anchor: middle; }
.ln-n { fill: #fff; font: 8px "Open Sans", sans-serif; text-anchor: middle; }
.tray { display: flex; align-items: center; margin-left: auto; font-size: 17px; }
.tray > span { display: flex; justify-content: center; width: 48px; }
.tray > span svg { width: 24px; height: 24px; }
.tray .meet { padding-left: 2px; }
.tray time { width: 81px; margin-left: 16px; color: #fff; letter-spacing: .1px; }
.notify { display: flex; align-items: center; justify-content: center; width: 60px; height: 46px; background: #2b2c2e; }
.notify svg { width: 24px; height: 24px; }
.peek { width: 20px; height: 46px; border-right: 7px solid transparent; background: linear-gradient(90deg, transparent 11px, #7a7a7a 11px) padding-box; }
```
